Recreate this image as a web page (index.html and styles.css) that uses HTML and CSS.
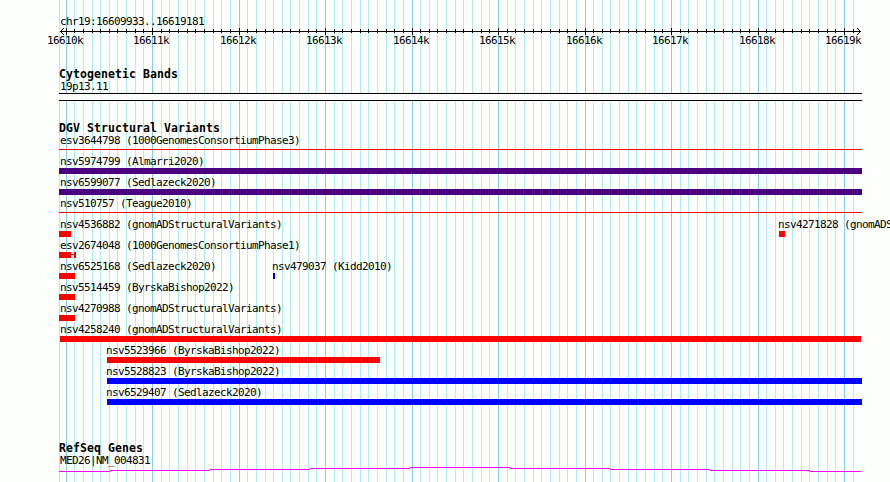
FILE: index.html
```html
<!DOCTYPE html>
<html>
<head>
  <meta charset="utf-8">
  <title>chr19:16609933..16619181</title>
  <link rel="stylesheet" href="styles.css">
</head>
<body>
  <svg class="gridlines" id="gridlines" width="890" height="482"></svg>
  <main class="panel">
    <header>
      <p class="region">chr19:16609933..16619181</p>
      <svg class="ruler" id="ruler" width="803" height="22">
        <path class="axis" d="M1 4.5H802M5 1L1.5 4.5L5 8M798 1L801.5 4.5L798 8"/>
      </svg>
    </header>

    <section class="cytobands">
      <h2>Cytogenetic Bands</h2>
      <p class="label clipped">19p13.11</p>
      <div class="band"></div>
    </section>

    <section class="variants">
      <h2>DGV Structural Variants</h2>
      <div class="row">
        <div class="feature" style="width: 803px"><p class="label clipped">esv3644798 (1000GenomesConsortiumPhase3)</p><div class="bar thin"></div></div>
      </div>
      <div class="row">
        <div class="feature" style="width: 803px"><p class="label clipped">nsv5974799 (Almarri2020)</p><div class="bar complex"></div></div>
      </div>
      <div class="row">
        <div class="feature" style="width: 803px"><p class="label clipped">nsv6599077 (Sedlazeck2020)</p><div class="bar complex"></div></div>
      </div>
      <div class="row">
        <div class="feature" style="width: 803px"><p class="label clipped">nsv510757 (Teague2010)</p><div class="bar thin"></div></div>
      </div>
      <div class="row">
        <div class="feature" style="width: 12px"><p class="label clipped">nsv4536882 (gnomADStructuralVariants)</p><div class="bar loss"></div></div>
        <div class="feature" style="margin-left: 708px; width: 6px"><p class="label inside">nsv4271828 (gnomADStructuralVariants)</p><div class="bar loss"></div></div>
      </div>
      <div class="row">
        <div class="feature" style="width: 17px">
          <p class="label clipped">esv2674048 (1000GenomesConsortiumPhase1)</p>
          <div class="split">
            <div class="bar loss" style="width: 12px"></div>
            <div class="bar thin" style="width: 3px"></div>
            <div class="bar loss" style="width: 2px"></div>
          </div>
        </div>
      </div>
      <div class="row">
        <div class="feature" style="width: 16px"><p class="label clipped">nsv6525168 (Sedlazeck2020)</p><div class="bar loss"></div></div>
        <div class="feature" style="margin-left: 198px; width: 2px"><p class="label inside">nsv479037 (Kidd2010)</p><div class="bar gain"></div></div>
      </div>
      <div class="row">
        <div class="feature" style="width: 16px"><p class="label clipped">nsv5514459 (ByrskaBishop2022)</p><div class="bar loss"></div></div>
      </div>
      <div class="row">
        <div class="feature" style="width: 16px"><p class="label clipped">nsv4270988 (gnomADStructuralVariants)</p><div class="bar loss"></div></div>
      </div>
      <div class="row">
        <div class="feature" style="margin-left: 1px; width: 801px"><p class="label">nsv4258240 (gnomADStructuralVariants)</p><div class="bar loss"></div></div>
      </div>
      <div class="row">
        <div class="feature" style="margin-left: 48px; width: 273px"><p class="label inside">nsv5523966 (ByrskaBishop2022)</p><div class="bar loss"></div></div>
      </div>
      <div class="row">
        <div class="feature" style="margin-left: 48px; width: 755px"><p class="label inside">nsv5528823 (ByrskaBishop2022)</p><div class="bar gain"></div></div>
      </div>
      <div class="row">
        <div class="feature" style="margin-left: 48px; width: 755px"><p class="label inside">nsv6529407 (Sedlazeck2020)</p><div class="bar gain"></div></div>
      </div>
    </section>

    <section class="genes">
      <h2>RefSeq Genes</h2>
      <p class="label clipped">MED26|NM_004831</p>
      <svg class="intron" width="803" height="6">
        <path d="M0 4.5H51M51 3.5H151M151 2.5H251M251 1.5H351M351 .5H451M451 1.5H551M551 2.5H651M651 3.5H751M751 4.5H802"/>
      </svg>
    </section>
  </main>

  <script>
    const svgNS = 'http://www.w3.org/2000/svg';
    const gridlines = document.getElementById('gridlines');
    const ruler = document.getElementById('ruler');
    const left = 59;
    const origin = 66.1;   // x of 16610k
    const step = 8.6488;   // pixels per 100 bp

    function addRect(parent, className, x, y, height) {
      const rect = document.createElementNS(svgNS, 'rect');
      rect.setAttribute('class', className);
      rect.setAttribute('x', x);
      rect.setAttribute('y', y);
      rect.setAttribute('width', 1);
      rect.setAttribute('height', height);
      parent.appendChild(rect);
    }

    addRect(gridlines, 'minor', left, 0, 482);

    for (let i = 0; i <= 91; i++) {
      const x = Math.floor(origin + i * step);
      const major = i % 10 === 0;
      addRect(gridlines, major ? 'major' : 'minor', x, 0, 482);
      addRect(ruler, 'tick', x - left, major ? 1 : 2, major ? 7 : 4);
      if (major) {
        const text = document.createElementNS(svgNS, 'text');
        text.setAttribute('x', x - left - 19);
        text.setAttribute('y', 17);
        text.textContent = (16610 + i / 10) + 'k';
        ruler.appendChild(text);
      }
    }
  </script>
</body>
</html>
```
FILE: styles.css
```css
body {
  margin: 0;
  height: 482px;
  position: relative;
  overflow: hidden;
  background-color: #fcfffc;
  color: #000;
  font-family: "DejaVu Sans Mono", monospace;
  font-size: 11px;
  line-height: 13px;
  letter-spacing: -0.622px;
}
p, h2 {
  margin: 0;
  white-space: pre;
}
h2 {
  height: 12px;
  font-size: 11.5px;
  font-weight: bold;
  line-height: 12px;
  letter-spacing: 0.077px;
}
svg {
  display: block;
}
.gridlines {
  position: absolute;
  top: 0;
  left: 0;
}
.minor {
  fill: #afeeee;
}
.major {
  fill: #87ceeb;
}
.panel {
  position: relative;
  width: 803px;
  padding: 15px 0 0 59px;
}
.region {
  height: 12px;
  padding-left: 1px;
}
.ruler {
  overflow: visible;
}
.axis {
  fill: none;
  stroke: #000;
}
.tick {
  fill: #000;
}
.cytobands {
  margin-top: 19px;
}
.band {
  height: 6px;
  background-color: #fff;
  border-top: 1px solid #000;
  border-bottom: 1px solid #000;
}
.variants {
  margin-top: 21px;
}
.row {
  display: flex;
  height: 21px;
}
.feature {
  flex: none;
}
.label {
  height: 13px;
}
.clipped {
  padding-left: 1px;
}
.inside {
  margin-left: -1px;
}
.split {
  display: flex;
}
.bar {
  height: 6px;
}
.loss {
  background-color: #f00;
}
.gain {
  background-color: #00f;
}
.complex {
  background-color: #4b0082;
}
.thin {
  height: 1px;
  margin-top: 2px;
  background-color: #f00;
}
.genes {
  margin-top: 35px;
}
.intron path {
  fill: none;
  stroke: #f0f;
}
```
